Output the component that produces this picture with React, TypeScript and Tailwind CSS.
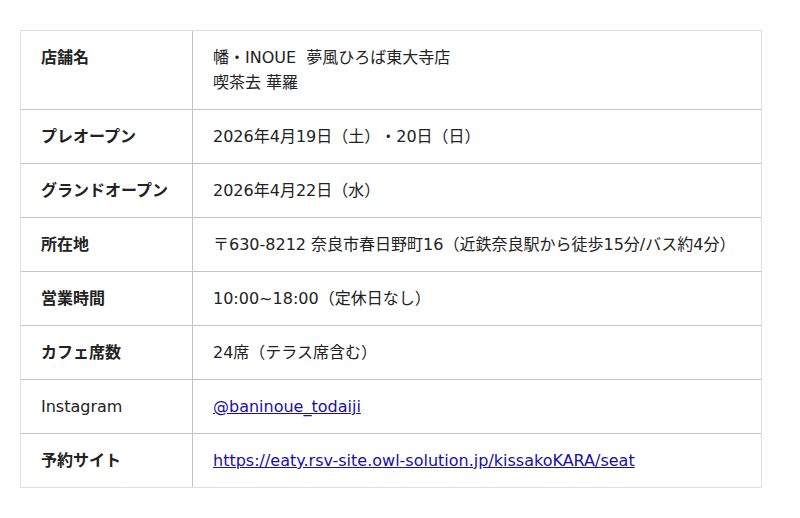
const rows: { label: string; bold: boolean; value: React.ReactNode }[] = [
  {
    label: '店舗名',
    bold: true,
    value: (
      <>
        幡・INOUE&nbsp;&nbsp;夢風ひろば東大寺店
        <br />
        喫茶去 華羅
      </>
    ),
  },
  { label: 'プレオープン', bold: true, value: '2026年4月19日（土）・20日（日）' },
  { label: 'グランドオープン', bold: true, value: '2026年4月22日（水）' },
  { label: '所在地', bold: true, value: '〒630-8212 奈良市春日野町16（近鉄奈良駅から徒歩15分/バス約4分）' },
  { label: '営業時間', bold: true, value: '10:00~18:00（定休日なし）' },
  { label: 'カフェ席数', bold: true, value: '24席（テラス席含む）' },
  {
    label: 'Instagram',
    bold: false,
    value: (
      <a href="#" className="text-[#1a0dab] underline">
        @baninoue_todaiji
      </a>
    ),
  },
  {
    label: '予約サイト',
    bold: true,
    value: (
      <a href="#" className="text-[#1a0dab] underline">
        https://eaty.rsv-site.owl-solution.jp/kissakoKARA/seat
      </a>
    ),
  },
];

export default function App() {
  return (
    <div className="min-h-[518px] bg-white px-5 pt-[30px]">
      <div className="w-[742px] border border-[#e0e0e0] font-[family-name:'DejaVu_Sans','Noto_Sans_CJK_JP',sans-serif] text-base leading-[25px] text-[#222] [text-spacing-trim:space-all]">
        {rows.map((r, i) => (
          <div
            key={r.label}
            className={`flex ${i < rows.length - 1 ? 'border-b border-[#c4c4c4]' : ''}`}
          >
            <div
              className={`w-[172px] shrink-0 border-r border-[#c4c4c4] px-5 py-[14px] ${
                r.bold ? 'font-bold' : 'font-normal'
              }`}
            >
              <div className={i === 0 ? 'h-[50px]' : 'h-[25px]'}>{r.label}</div>
            </div>
            <div className="flex-1 px-5 py-[14px]">
              <div className={i === 0 ? 'h-[50px]' : 'h-[25px]'}>{r.value}</div>
            </div>
          </div>
        ))}
      </div>
    </div>
  );
}
